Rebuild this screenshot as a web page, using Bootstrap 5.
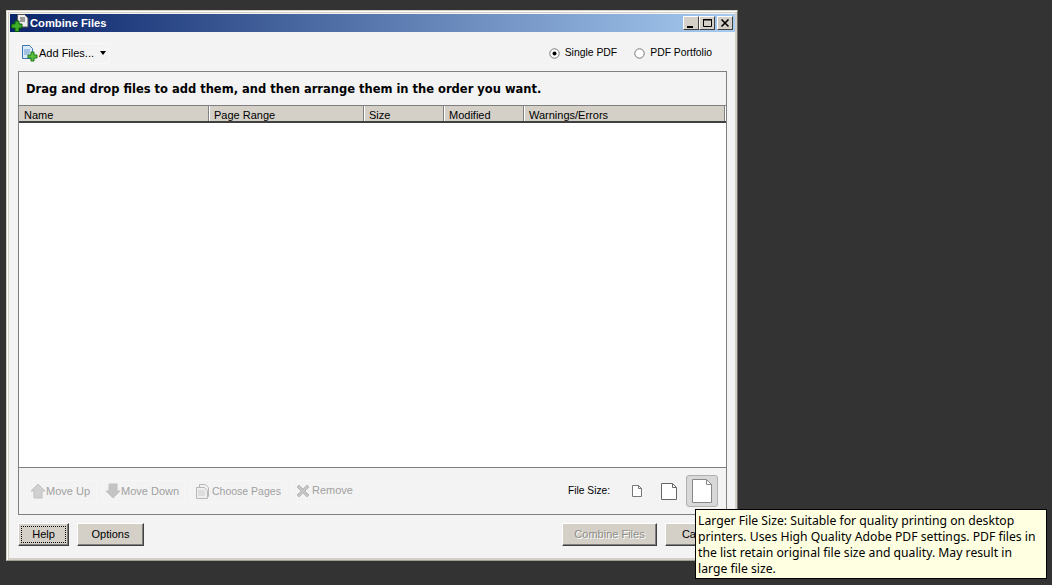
<!DOCTYPE html>
<html lang="en"><head><meta charset="utf-8"><title>Combine Files</title>
<link href="https://cdn.jsdelivr.net/npm/bootstrap@5.3.0/dist/css/bootstrap.min.css" rel="stylesheet">
<style>
html,body{height:100%;}
body{background:#333;font-family:"Liberation Sans",Arial,sans-serif;font-size:11px;line-height:14px;color:#000;overflow:hidden;padding:10px 0 0 6px;position:relative;}
.dlg{width:732px;height:551px;background:#f3f3f3;border:1px solid #d4d0c8;border-right-color:#706e68;border-bottom-color:#a09c94;box-shadow:inset 1px 1px 0 #fff,inset -1px -1px 0 #d4d0c8,inset 2px 2px 0 #d4d0c8,inset -2px -2px 0 #d4d0c8;padding:3px 2px 0 3px;}
.ttl{height:18px;background:linear-gradient(90deg,#0a246a,#a6caf0);color:#fff;font-weight:700;font-size:11.2px;padding-left:1px;}
.ttl-ic{width:18px;height:18px;flex:none;margin-right:1px;}
.wb{width:16px;height:14px;background:#d4d0c8;border:1px solid;border-color:#fff #404040 #404040 #fff;display:block;}
.wb svg{display:block;}
.wbs{gap:2px;padding-right:2px;}
.toptool{height:41px;padding:3px 23px 0 7px;}
.addf{height:21px;padding:0 3px;border:1px solid #f8f8f8;border-radius:2px;font-size:11px;}
.caret-mini{width:0;height:0;border:3px solid transparent;border-top:4px solid #000;border-bottom:0;margin-left:6px;}
.rad{gap:5px;font-size:10.4px;}
.rad+.rad{margin-left:17px;}
.panel{margin:0 8px 0 8px;height:444px;border:1px solid #808080;background:#f3f3f3;}
.hint{height:34px;font-family:"DejaVu Sans",sans-serif;font-weight:700;font-size:11.5px;padding-left:7px;border-bottom:1px solid #808080;}
.thd{height:17px;background:#d4d0c8;border-bottom:2px solid #404040;padding-right:2px;}
.thc{flex:none;height:15px;padding:2px 0 0 5px;border-right:1px solid #808080;box-shadow:1px 0 0 #fff;line-height:14px;}
.lst{height:345px;background:#fff;border-bottom:1px solid #808080;}
.foot{height:46px;padding:0 8px 0 8px;}
.tbs{gap:5px;}
.tb{height:23px;padding:0 2px;border:1px solid #f6f6f6;border-radius:3px;color:#a0a0a0;flex:none;white-space:nowrap;}
.tb1{width:70px;}.tb2{width:83px;}.tb3{width:97px;}.tb4{width:66px;}
.tb4 span{margin-top:-2px;}
.tb3 svg{margin-left:2px;margin-right:1px;}
.tb3 span{font-size:10.5px;}
.tb4 svg{margin-right:1px;}
.fsl{margin-right:20px;font-size:10.2px;}
.sz{flex:none;}
.szon{width:32px;height:32px;background:#d8d8d8;border:1px solid #b0b0b0;border-radius:3px;}
.act{height:47px;margin:0 2px 0 8px;padding-top:8px;}
.wbtn{height:23px;padding:0;border:1px solid;border-color:#fff #404040 #404040 #fff;background:#d4d0c8;color:#000;font-size:11px;line-height:19px;border-radius:0;box-shadow:inset -1px -1px 0 #808080;}
.wbtn:disabled{background:#d4d0c8;color:#8e8c86;opacity:1;border-color:#fff #404040 #404040 #fff;text-shadow:1px 1px 0 #fff;}
.hlp{width:51px;outline:1px dotted #000;outline-offset:-4px;}
.opt{width:67px;margin-left:8px;}
.cmb{width:95px;}
.can{width:68px;margin-left:8px;}
.tip{position:absolute;left:695px;top:509px;width:352px;height:70px;background:#ffffe1;border:1px solid #000;padding:3px 0 0 2px;font-family:"Noto Sans",sans-serif;font-size:12.2px;line-height:16px;white-space:nowrap;}
</style></head>
<body>
<div class="dlg d-flex flex-column">
 <div class="ttl d-flex align-items-center">
  <svg class="ttl-ic" viewBox="0 0 18 18"><path d="M6.500.5h7l3.500 3.500v9H6.500z" fill="#eee" stroke="#555"/><path d="M9 3h5v5H9z" fill="#999"/><path d="M4 7h4v3h3v4H8v3.500H4V14H.5v-4H4z" fill="#3fae2a" stroke="#0c5a0c"/></svg>
  <span class="flex-grow-1">Combine Files</span>
  <div class="d-flex wbs">
   <span class="d-flex"><span class="wb"><svg width="14" height="12" viewBox="0 0 14 12"><path d="M3 9h6v2H3z" fill="#000"/></svg></span><span class="wb"><svg width="14" height="12" viewBox="0 0 14 12"><path d="M3.500 2.500h8v7h-8z" fill="none" stroke="#000"/><path d="M3 2h9v1.500H3z"/></svg></span></span>
   <span class="wb"><svg width="14" height="12" viewBox="0 0 14 12"><path d="M3.500 2.500l7 7M10.500 2.500l-7 7" stroke="#000" stroke-width="1.600"/></svg></span>
  </div>
 </div>
 <div class="toptool d-flex align-items-center justify-content-between">
  <div class="addf d-flex align-items-center">
   <svg width="18" height="18" viewBox="0 0 18 18"><path d="M1.500 1.500h7l3 3v10h-10z" fill="#dceaf8" stroke="#3a78b8"/><path d="M3 6h6M3 8h6M3 10h5" stroke="#6a98c8"/><path d="M10 8h3v3h3v3h-3v3h-3v-3H7v-3h3z" fill="#5cc03c" stroke="#1a7a1a"/></svg>
   <span>Add Files...</span><span class="caret-mini"></span>
  </div>
  <div class="d-flex">
   <div class="rad d-flex align-items-center">
    <svg width="11" height="11" viewBox="0 0 11 11"><circle cx="5.500" cy="5.500" r="4.700" fill="#fff" stroke="#777"/><circle cx="5.500" cy="5.500" r="2"/></svg><span>Single PDF</span>
   </div>
   <div class="rad d-flex align-items-center">
    <svg width="11" height="11" viewBox="0 0 11 11"><circle cx="5.500" cy="5.500" r="4.700" fill="#fff" stroke="#777"/></svg><span>PDF Portfolio</span>
   </div>
  </div>
 </div>
 <div class="panel d-flex flex-column">
  <div class="hint d-flex align-items-center">Drag and drop files to add them, and then arrange them in the order you want.</div>
  <div class="thd d-flex">
   <div class="thc" style="width:190px">Name</div>
   <div class="thc" style="width:155px">Page Range</div>
   <div class="thc" style="width:80px">Size</div>
   <div class="thc" style="width:80px">Modified</div>
   <div class="thc" style="width:201px">Warnings/Errors</div>
  </div>
  <div class="lst"></div>
  <div class="foot d-flex align-items-center">
   <div class="tbs d-flex align-items-center">
    <div class="tb tb1 d-flex align-items-center"><svg width="16" height="16" viewBox="0 0 16 16"><path d="M8 1l7 7h-3v7H4V8H1z" fill="#d0d0d0" stroke="#c0c0c0"/></svg><span>Move Up</span></div>
    <div class="tb tb2 d-flex align-items-center"><svg width="16" height="16" viewBox="0 0 16 16"><path d="M8 15l7-7h-3V1H4v7H1z" fill="#c4c4c4" stroke="#c0c0c0"/></svg><span>Move Down</span></div>
    <div class="tb tb3 d-flex align-items-center"><svg width="16" height="17" viewBox="0 0 16 17"><path d="M4.500 1.500h6l3 3v9h-9z" fill="#f0f0f0" stroke="#b8b8b8"/><path d="M1.500 4.500h8l3 3v8h-11z" fill="#eee" stroke="#b8b8b8"/><path d="M3 8h7M3 10h7M3 12h7" stroke="#ccc"/></svg><span>Choose Pages</span></div>
    <div class="tb tb4 d-flex align-items-center"><svg width="16" height="16" viewBox="0 0 16 16"><path d="M2 4l2-2 4 4 4-4 2 2-4 4 4 4-2 2-4-4-4 4-2-2 4-4z" fill="#c4c4c4" stroke="#bcbcbc"/></svg><span>Remove</span></div>
   </div>
   <div class="ms-auto d-flex align-items-center">
    <span class="fsl">File Size:</span>
    <svg class="sz" width="14" height="14" viewBox="0 0 14 14"><path d="M2.500 1.500h6l3 3v8h-9z" fill="#fff" stroke="#777"/><path d="M8.500 1.500v3h3" fill="none" stroke="#777"/></svg>
    <svg class="sz ms-3" width="18" height="19" viewBox="0 0 18 19"><path d="M1.500 1.500h11l4 4v12h-15z" fill="#fff" stroke="#666"/><path d="M12.500 1.500v4h4" fill="none" stroke="#666"/></svg>
    <div class="szon d-flex align-items-center justify-content-center sz ms-2"><svg width="20" height="24" viewBox="0 0 20 24"><path d="M.5.500h14l5 5v18H.5z" fill="#fff" stroke="#888"/><path d="M14.500.5v5h5" fill="none" stroke="#888"/></svg></div>
   </div>
  </div>
 </div>
 <div class="act d-flex">
  <button class="btn wbtn hlp" type="button">Help</button>
  <button class="btn wbtn opt" type="button">Options</button>
  <div class="ms-auto d-flex">
   <button class="btn wbtn cmb" type="button" disabled>Combine Files</button>
   <button class="btn wbtn can" type="button">Cancel</button>
  </div>
 </div>
</div>
<div class="tip">Larger File Size: Suitable for quality printing on desktop<br>printers. Uses High Quality Adobe PDF settings. PDF files in<br>the list retain original file size and quality. May result in<br>large file size.</div>
<script src="https://cdn.jsdelivr.net/npm/bootstrap@5.3.0/dist/js/bootstrap.bundle.min.js"></script>
</body></html>
